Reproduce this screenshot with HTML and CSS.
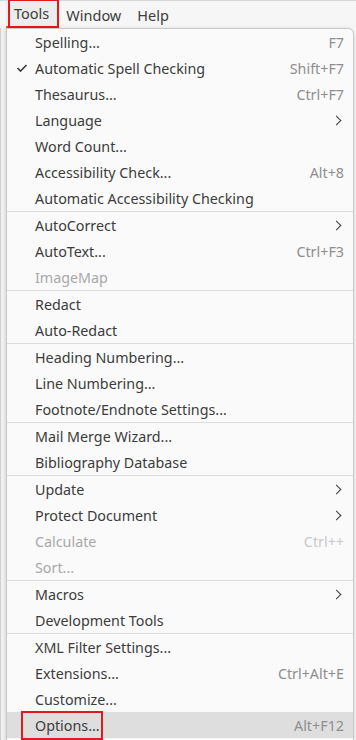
FILE: index.html
```html
<!DOCTYPE html>
<html lang="en">
<head>
    <meta charset="UTF-8">
    <meta name="viewport" content="width=device-width, initial-scale=1.0">
    <title>Tools menu</title>
    <link rel="stylesheet" href="styles.css">
</head>
<body>
    <!-- Menu bar -->
    <div class="menubar">
        <span class="menubar-item active"><span class="mark">Tools</span></span>
        <span class="menubar-item">Window</span>
        <span class="menubar-item">Help</span>
    </div>

    <div class="workspace">
        <div class="side-strip"></div>
    </div>

    <!-- Tools dropdown -->
    <div class="menu">
        <div class="item"><span class="label">Spelling...</span><span class="accel">F7</span></div>
        <div class="item">
            <svg class="check" width="12" height="10" viewBox="0 0 12 10"><polyline points="1.5,5 4.5,8 10.5,2" fill="none" stroke="#3c3c3c" stroke-width="1.6"/></svg>
            <span class="label">Automatic Spell Checking</span><span class="accel">Shift+F7</span>
        </div>
        <div class="item"><span class="label">Thesaurus...</span><span class="accel">Ctrl+F7</span></div>
        <div class="item"><span class="label">Language</span><span class="arrow"></span></div>
        <div class="item"><span class="label">Word Count...</span></div>
        <div class="item"><span class="label">Accessibility Check...</span><span class="accel">Alt+8</span></div>
        <div class="item"><span class="label">Automatic Accessibility Checking</span></div>
        <div class="sep"></div>
        <div class="item"><span class="label">AutoCorrect</span><span class="arrow"></span></div>
        <div class="item"><span class="label">AutoText...</span><span class="accel">Ctrl+F3</span></div>
        <div class="item disabled"><span class="label">ImageMap</span></div>
        <div class="sep"></div>
        <div class="item"><span class="label">Redact</span></div>
        <div class="item"><span class="label">Auto-Redact</span></div>
        <div class="sep"></div>
        <div class="item"><span class="label">Heading Numbering...</span></div>
        <div class="item"><span class="label">Line Numbering...</span></div>
        <div class="item"><span class="label">Footnote/Endnote Settings...</span></div>
        <div class="sep"></div>
        <div class="item"><span class="label">Mail Merge Wizard...</span></div>
        <div class="item"><span class="label">Bibliography Database</span></div>
        <div class="sep"></div>
        <div class="item"><span class="label">Update</span><span class="arrow"></span></div>
        <div class="item"><span class="label">Protect Document</span><span class="arrow"></span></div>
        <div class="item disabled"><span class="label">Calculate</span><span class="accel">Ctrl++</span></div>
        <div class="item disabled"><span class="label">Sort...</span></div>
        <div class="sep"></div>
        <div class="item"><span class="label">Macros</span><span class="arrow"></span></div>
        <div class="item"><span class="label">Development Tools</span></div>
        <div class="sep"></div>
        <div class="item"><span class="label">XML Filter Settings...</span></div>
        <div class="item"><span class="label">Extensions...</span><span class="accel">Ctrl+Alt+E</span></div>
        <div class="item"><span class="label">Customize...</span></div>
        <div class="item selected"><span class="label mark">Options...</span><span class="accel">Alt+F12</span></div>
    </div>
</body>
</html>
```

FILE: styles.css
```css
body {
    margin: 0;
    font-family: 'Noto Sans', 'Open Sans', sans-serif;
    font-size: 14.3px;
    color: #3c3c3c;
    background-color: #fafafa;
    height: 740px;
    overflow: hidden;
}

.menubar {
    height: 28px;
    display: flex;
    align-items: center;
    padding-left: 6px;
    background-color: #f6f6f6;
    border-top: 1px solid #d8d8d8;
    box-sizing: border-box;
    font-size: 14.5px;
}

.menubar-item {
    padding: 0 8px;
    height: 100%;
    display: flex;
    align-items: center;
    box-sizing: border-box;
}

.menubar-item.active {
    padding: 0 1px 0 4px;
    border-bottom: 2px solid #e95420;
    background-color: #ececec;
}

.mark {
    outline: 2px solid #e01b1b;
}

.menubar-item.active .mark {
    padding: 2px 8px 3px 4px;
}

.workspace {
    height: 712px;
    display: flex;
}

.side-strip {
    width: 6px;
    border-left: 1px solid #cfcfcf;
    background-color: #f2f2f2;
}

.menu {
    position: absolute;
    top: 28px;
    left: 6px;
    width: 346px;
    height: 720px;
    background-color: #fafafa;
    border: 1px solid #c9c9c9;
    border-radius: 0 6px 6px 6px;
    box-shadow: 0 1px 4px rgba(0, 0, 0, 0.18);
}

.item {
    height: 26px;
    display: flex;
    align-items: center;
    padding: 0 9px 0 28px;
    position: relative;
}

.label {
    flex: 1;
}

.accel {
    color: #8e8e8e;
}

.disabled .label {
    color: #a8a8a8;
}

.disabled .accel {
    color: #c8c8c8;
}

.check {
    position: absolute;
    left: 9px;
    top: 8px;
}

.arrow {
    width: 6px;
    height: 6px;
    border-top: 1px solid #3c3c3c;
    border-right: 1px solid #3c3c3c;
    transform: rotate(45deg);
    margin-right: 4px;
}

.sep {
    height: 1px;
    background-color: #dddddd;
}

.selected {
    background-color: #dedede;
}

.selected .label.mark {
    flex: 0 0 auto;
    padding: 3px 1px 3px 12px;
    margin-left: -12px;
    margin-right: auto;
}
```
